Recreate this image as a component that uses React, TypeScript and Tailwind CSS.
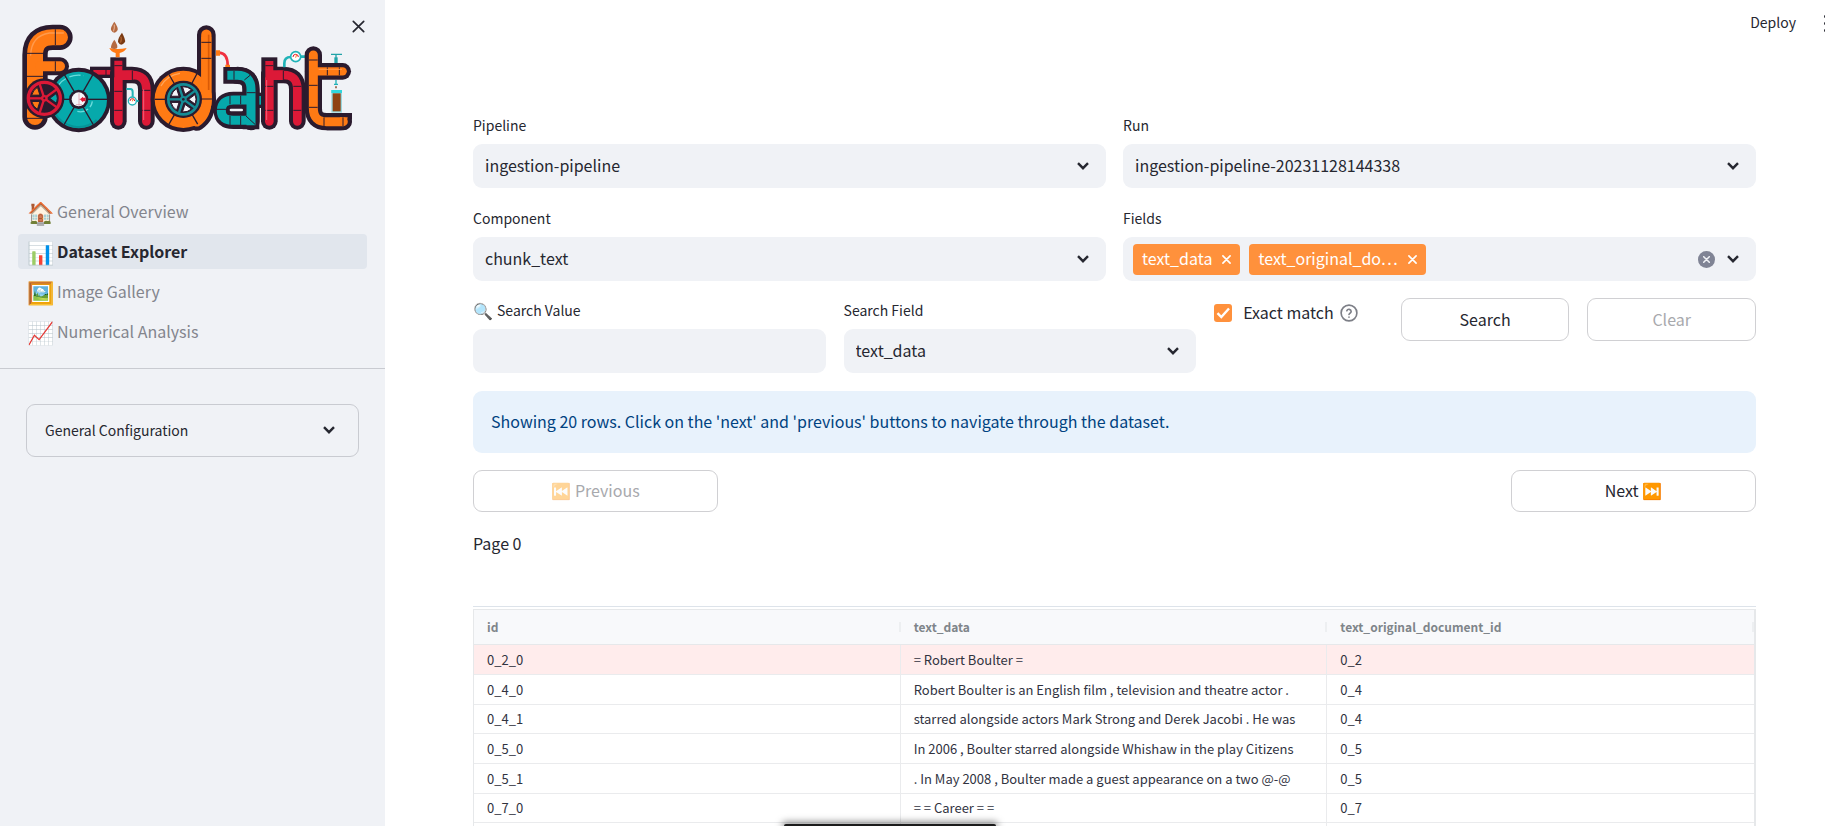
import React from "react";

const INK = "#2b1b2e";
const ORANGE = "#ff7a14";
const RED = "#dc1937";
const TEAL = "#06a9ab";

function polar(cx: number, cy: number, r: number, deg: number) {
  const a = (deg * Math.PI) / 180;
  return { x: cx + r * Math.cos(a), y: cy + r * Math.sin(a) };
}

function Spokes({ cx, cy, from, to, angles, color, width }: {
  cx: number; cy: number; from: number; to: number; angles: number[]; color: string; width: number;
}) {
  return (
    <g stroke={color} strokeWidth={width}>
      {angles.map((a) => {
        const p = polar(cx, cy, from, a);
        const q = polar(cx, cy, to, a);
        return <line key={a} x1={p.x} y1={p.y} x2={q.x} y2={q.y} />;
      })}
    </g>
  );
}

function Pipe({ d, color, width = 26, outline = 50, cap = "round" }: {
  d: string; color: string; width?: number; outline?: number; cap?: "round" | "butt" | "square";
}) {
  return (
    <g fill="none" strokeLinecap={cap} strokeLinejoin="round">
      <path d={d} stroke={INK} strokeWidth={outline} />
      <path d={d} stroke={color} strokeWidth={width} />
    </g>
  );
}

function Windows({ cx, cy, r, fills, start }: { cx: number; cy: number; r: number; fills: string[]; start: number }) {
  return (
    <g stroke={INK} strokeWidth="3" strokeLinejoin="round">
      {fills.map((fill, i) => {
        const mid = start + i * 72;
        const a = polar(cx, cy, r * 0.42, mid);
        const b = polar(cx, cy, r, mid - 22);
        const c = polar(cx, cy, r, mid + 22);
        return <path key={i} fill={fill} d={`M${a.x} ${a.y}L${b.x} ${b.y}A${r} ${r} 0 0 1 ${c.x} ${c.y}Z`} />;
      })}
    </g>
  );
}

function Logo() {
  return (
    <svg viewBox="60 54 996 345" className="h-[115px] w-[332px]" role="img" aria-label="Fondant">
      {/* f */}
      <g fill="none" strokeLinecap="round">
        <path d="M105 351V165Q105 112 158 112H180" stroke={INK} strokeWidth="76" />
        <path d="M120 199H180" stroke={INK} strokeWidth="54" />
        <path d="M105 351V165Q105 112 158 112H180" stroke={ORANGE} strokeWidth="48" />
        <path d="M120 199H180" stroke={ORANGE} strokeWidth="30" />
        <path d="M92 165Q94 108 148 99H190" stroke="#ff9a4d" strokeWidth="4" />
      </g>
      <path d="M166 88V135M80 160H130M80 229H130M80 355H130M166 184V214" stroke={INK} strokeWidth="3" />
      {/* n, with its feed pipe */}
      <path d="M270 217H340" stroke={INK} strokeWidth="34" />
      <path d="M280 217H350" stroke={RED} strokeWidth="14" />
      <Pipe d="M355 225H396Q439 225 439 268V364" color={RED} />
      <Pipe d="M355 225V364" color={RED} />
      <rect x="331" y="172" width="48" height="60" fill={INK} />
      <path d="M343 182H367V240H343ZM360 211H400V240H360Z" fill={RED} />
      <path d="M343 197H367M343 274H367M343 331H367M427 271H451M427 331H451M397 211V240M318 209V225" stroke={INK} strokeWidth="3" />
      <path d="M431 268V360" stroke="#f2617a" strokeWidth="3" />
      <path d="M328 144Q353 150 380 144Q374 156 359 159V172H347V159Q333 156 328 144Z" fill={ORANGE} />
      <path d="M343 65Q355 82 353 90Q343 107 333 90Q331 82 343 65Z" fill="#b46a42" />
      <path d="M343 74Q345 86 340 94" stroke="#e0a684" strokeWidth="4" fill="none" />
      <path d="M366 98Q377 118 375 126Q363 142 354 126Q353 115 366 98Z" fill="#7a3a12" />
      <path d="M362 110Q367 118 361 128" stroke="#a85d2c" strokeWidth="4" fill="none" />
      <path d="M343 119Q355 136 351 145Q342 149 333 144Q332 134 343 119Z" fill="#b46a42" />
      <path d="M379 267H391Q398 267 398 276V290M410 303H416" stroke="#21b3b8" strokeWidth="6" fill="none" />
      <circle cx="397" cy="303" r="12" fill="#fff" stroke="#21b3b8" strokeWidth="4" />
      <path d="M390 303A7 7 0 0 1 404 303" stroke={RED} strokeWidth="3" fill="none" />
      <path d="M397 304L400 296" stroke={ORANGE} strokeWidth="3" />
      {/* o */}
      <circle cx="236" cy="300" r="97" fill={INK} />
      <circle cx="236" cy="300" r="85" fill={TEAL} />
      <path d="M163 335A81 81 0 0 0 290 360" stroke="#07878c" strokeWidth="6" fill="none" opacity=".6" />
      <path d="M175 256A75 75 0 0 1 250 227M232 334A36 36 0 0 0 277 304" stroke="#6bdcdc" strokeWidth="4" strokeDasharray="34 8" fill="none" />
      <Spokes cx={236} cy={298} from={25} to={88} angles={[0, 60, 120, 180, 240, 300]} color={INK} width={4} />
      <circle cx="236" cy="298" r="29" fill={INK} />
      <circle cx="236" cy="298" r="21" fill="#f5f6fa" />
      <path d="M237 280V317M228 314H246M237 298H250" stroke="#d98a9a" strokeWidth="2" />
      <path d="M240 298L249 290V293H257V304H249V307Z" fill={RED} />
      {/* red hand wheel */}
      <circle cx="133" cy="295" r="60" fill={INK} />
      <Windows cx={133} cy={295} r={39} start={-144} fills={[ORANGE, INK, TEAL, INK, ORANGE]} />
      <circle cx="133" cy="295" r="48" fill="none" stroke={RED} strokeWidth="10" />
      <Spokes cx={133} cy={295} from={0} to={45} angles={[180, 108, 36, -36, -108]} color={RED} width={7} />
      <circle cx="133" cy="295" r="10" fill={RED} />
      <circle cx="133" cy="295" r="3" fill={INK} />
      {/* d */}
      <circle cx="550" cy="298" r="98" fill={INK} />
      <Pipe d="M619 104V300Q619 345 590 364" color={ORANGE} width={31} outline={56} />
      <circle cx="550" cy="298" r="70" fill="none" stroke={ORANGE} strokeWidth="32" />
      <path d="M604 110V300L634 298V110Z" fill={ORANGE} />
      <path d="M626 104V270" stroke="#d95a06" strokeWidth="5" />
      <path d="M483 258A78 78 0 0 1 540 220" stroke="#ffa55c" strokeWidth="4" fill="none" />
      <Spokes cx={550} cy={298} from={54} to={86} angles={[60, 120, 180, 240, 298]} color={INK} width={4} />
      <path d="M604 127H634M604 175H634M604 297H636" stroke={INK} strokeWidth="3" />
      <circle cx="550" cy="298" r="56" fill={INK} />
      <Windows cx={550} cy={298} r={38} start={-144} fills={["#f5f6fa", "#f5f6fa", "#f5f6fa", "#f5f6fa", "#f5f6fa"]} />
      <circle cx="550" cy="298" r="45" fill="none" stroke="#168c95" strokeWidth="8" />
      <Spokes cx={550} cy={298} from={0} to={42} angles={[180, 108, 36, -36, -108]} color="#168c95" width={7} />
      <circle cx="550" cy="298" r="10" fill="#168c95" />
      <circle cx="550" cy="298" r="4" fill={INK} />
      {/* return pipe right of d */}
      <path d="M658 158Q683 160 683 196" stroke="#f0303f" strokeWidth="8" fill="none" />
      <path d="M648 151H660V167H648ZM676 194H690V204H676Z" fill={ORANGE} />
      {/* a */}
      <g fill="none" strokeLinejoin="round">
        <path d="M670 226H712Q753 226 753 268V388M753 300H700Q666 300 666 332Q666 362 700 362H753" stroke={INK} strokeWidth="50" />
        <path d="M712 226Q753 226 753 268V365" stroke={INK} strokeWidth="52" strokeLinecap="round" />
        <path d="M682 226H712Q753 226 753 268V376" stroke={TEAL} strokeWidth="27" />
        <path d="M753 300H700Q664 300 664 332Q664 361 700 361H753" stroke={TEAL} strokeWidth="27" />
      </g>
      <path d="M687 318H736V342H687Q677 330 687 318Z" fill={INK} />
      <rect x="689" y="326" width="40" height="8" rx="4" fill="#f0f2f6" />
      <path d="M702 213V239M740 278H767M690 287V313M690 348V375M722 287V313M722 348V375M738 348L766 374M650 328H678M733 240L750 226" stroke={INK} strokeWidth="3" />
      <rect x="776" y="278" width="14" height="46" fill={INK} />
      <rect x="778" y="288" width="16" height="26" fill={TEAL} />
      {/* second n */}
      <Pipe d="M808 225H850Q892 225 892 268V364" color={RED} />
      <Pipe d="M808 225V364" color={RED} />
      <rect x="784" y="172" width="48" height="60" fill={INK} />
      <path d="M796 183H820V240H796ZM815 211H852V240H815Z" fill={RED} />
      <path d="M796 197H820M796 259H820M796 331H820M880 259H904M880 331H904M850 211V240" stroke={INK} strokeWidth="3" />
      <path d="M800 240V360" stroke="#f2617a" strokeWidth="3" />
      <path d="M853 202V190Q853 171 872 171M902 170H920" stroke="#21b3b8" strokeWidth="8" fill="none" />
      <circle cx="887" cy="170" r="15" fill="#fff" stroke="#21b3b8" strokeWidth="5" />
      <path d="M879 171A8 8 0 0 1 895 171" stroke={RED} strokeWidth="3" fill="none" />
      <path d="M887 173L890 163" stroke={ORANGE} strokeWidth="3" />
      {/* t, tap and beaker */}
      <path d="M993 163H1026M1008 163V192" stroke="#21a3a8" strokeWidth="4" />
      <path d="M1008 172V192" stroke="#21a3a8" strokeWidth="10" />
      <path d="M940 214H1028" stroke={INK} strokeWidth="50" strokeLinecap="round" />
      <path d="M940 165V325Q940 365 980 365H1030" stroke={INK} strokeWidth="52" fill="none" strokeLinecap="round" />
      <path d="M985 339H1056V355Q1054 391 1022 391H980Z" fill={INK} />
      <path d="M940 165V325Q940 365 980 365H1030" stroke={ORANGE} strokeWidth="27" fill="none" strokeLinecap="round" />
      <path d="M1020 352H1043Q1041 378 1020 378Z" fill={ORANGE} />
      <path d="M945 214H1028" stroke={ORANGE} strokeWidth="25" strokeLinecap="round" />
      <path d="M927 180H953M927 256H953M927 322H953M982 202V226M1018 202V226M972 352V378M1029 352V378" stroke={INK} strokeWidth="3" />
      <path d="M956 208H1026" stroke="#ff9a4d" strokeWidth="3" />
      <path d="M1008 240V253M1002 253H1014" stroke="#21b3b8" strokeWidth="4" />
      <path d="M1008 259V265" stroke="#7a3a12" strokeWidth="4" />
      <rect x="994" y="270" width="32" height="68" fill="#9ad7de" />
      <rect x="994" y="270" width="32" height="9" fill="#2fd6dc" />
      <rect x="998" y="280" width="24" height="54" fill="#8f4313" />
    </svg>
  );
}

function Chevron({ className = "" }: { className?: string }) {
  return (
    <svg viewBox="0 0 12 8" className={`h-2 w-3 ${className}`} fill="none" stroke="#262730" strokeWidth="2.4" aria-hidden="true">
      <path d="M1 1.2L6 6.2L11 1.2" />
    </svg>
  );
}

function Cross({ className }: { className: string }) {
  return (
    <svg viewBox="0 0 10 10" className={className} fill="none" stroke="currentColor" strokeLinecap="round" aria-hidden="true">
      <path d="M1 1L9 9M9 1L1 9" />
    </svg>
  );
}

const labelClass = "mb-2.5 flex h-[18px] items-center gap-1 text-sm leading-[18px]";
const buttonClass = "rounded-[9px] border border-[#d0d0d3] bg-white pb-0.5 text-base leading-6";

function SelectField({ id, label, value }: { id: string; label: string; value: string }) {
  return (
    <div className="min-w-0">
      <label htmlFor={id} className={labelClass}>{label}</label>
      <div className="relative">
        <select id={id} className="h-11 w-full appearance-none rounded-[9px] bg-[#f0f2f6] px-3 pb-0.5 text-base leading-6">
          <option>{value}</option>
        </select>
        <Chevron className="pointer-events-none absolute top-[18px] right-[17px]" />
      </div>
    </div>
  );
}

const pages = [
  { icon: "🏠", name: "General Overview" },
  { icon: "📊", name: "Dataset Explorer", current: true },
  { icon: "🖼️", name: "Image Gallery" },
  { icon: "📈", name: "Numerical Analysis" },
];

const rows = [
  ["0_2_0", "= Robert Boulter =", "0_2"],
  ["0_4_0", "Robert Boulter is an English film , television and theatre actor .", "0_4"],
  ["0_4_1", "starred alongside actors Mark Strong and Derek Jacobi . He was", "0_4"],
  ["0_5_0", "In 2006 , Boulter starred alongside Whishaw in the play Citizens", "0_5"],
  ["0_5_1", ". In May 2008 , Boulter made a guest appearance on a two @-@", "0_5"],
  ["0_7_0", "= = Career = =", "0_7"],
  ["", "", ""],
];

function Sidebar() {
  return (
    <aside className="w-[385px] shrink-0 bg-[#f0f2f6]">
      <div className="flex items-start pt-[18px] pl-5">
        <Logo />
        <button aria-label="Close sidebar" className="mt-0.5">
          <Cross className="h-[13px] w-[13px] stroke-[1.3]" />
        </button>
      </div>
      <nav className="mt-[61px] flex flex-col gap-[5px] border-b border-[#c9cbd1] px-[18px] pb-[19px]">
        {pages.map((p) => (
          <a
            key={p.name}
            href="#"
            className={`flex h-[35px] items-center gap-[5px] rounded px-2.5 pb-0.5 text-base ${
              p.current ? "bg-[#e1e6ed] font-bold text-[#262730]" : "text-[#83858d]"
            }`}
          >
            <span className="flex w-6 justify-center text-[22px] leading-6 font-normal text-[#262730]">{p.icon}</span>
            {p.name}
          </a>
        ))}
      </nav>
      <button className="mx-[26px] mt-[35px] flex h-[53px] w-[333px] items-center justify-between rounded-[9px] border border-[#c9cbd1] pr-[23px] pb-0.5 pl-[18px] text-sm">
        General Configuration
        <Chevron />
      </button>
    </aside>
  );
}

export default function App() {
  return (
    <div className="flex h-screen overflow-hidden bg-white font-['Source_Sans_Pro','Noto_Sans_CJK_SC',sans-serif] text-[#262730]">
      <Sidebar />
      <main className="min-w-0 flex-1">
        <header className="flex h-[46px] items-center justify-end gap-7 overflow-hidden">
          <button className="pb-0.5 text-sm leading-5">Deploy</button>
          <button aria-label="Menu" className="-mr-0.5 flex flex-col gap-1">
            <span className="size-[3px] rounded-full bg-[#262730]" />
            <span className="size-[3px] rounded-full bg-[#262730]" />
            <span className="size-[3px] rounded-full bg-[#262730]" />
          </button>
        </header>
        <div className="pt-[70px] pr-[69px] pl-[88px]">
          <div className="grid grid-cols-2 gap-x-[17px] gap-y-[21px]">
            <SelectField id="pipeline" label="Pipeline" value="ingestion-pipeline" />
            <SelectField id="run" label="Run" value="ingestion-pipeline-20231128144338" />
            <SelectField id="component" label="Component" value="chunk_text" />
            <div role="group" aria-labelledby="fields-label">
              <span id="fields-label" className={labelClass}>Fields</span>
              <div className="flex h-11 items-center rounded-[9px] bg-[#f0f2f6] pr-[17px] pl-2.5">
                <div className="flex flex-1 gap-[9px] text-base text-white">
                  {["text_data", "text_original_do…"].map((f) => (
                    <span key={f} className="flex h-[31px] items-center gap-2.5 rounded bg-[#ff913c] px-[9px]">
                      <span className="pb-0.5">{f}</span>
                      <button aria-label={`Remove ${f}`}><Cross className="size-[9px] stroke-[1.8]" /></button>
                    </span>
                  ))}
                </div>
                <button aria-label="Clear all" className="mr-3 flex size-[17px] items-center justify-center rounded-full bg-[#808495] text-[#f0f2f6]">
                  <Cross className="size-[7px] stroke-[2.2]" />
                </button>
                <button aria-label="Open"><Chevron /></button>
              </div>
            </div>
          </div>

          <div className="mt-5 grid grid-cols-[23fr_23fr_11fr_11fr_11fr] items-start gap-[18px]">
            <div>
              <label htmlFor="search-value" className={labelClass}>
                <span className="text-base leading-[18px]">🔍</span>
                Search Value
              </label>
              <input id="search-value" type="text" className="block h-11 w-full rounded-[9px] bg-[#f0f2f6] px-3 text-base" />
            </div>
            <SelectField id="search-field" label="Search Field" value="text_data" />
            <div className="flex h-6 items-center whitespace-nowrap text-base">
              <label className="flex items-center gap-[11px]">
                <span className="relative flex size-[18px]">
                  <input type="checkbox" defaultChecked className="size-[18px] appearance-none rounded-[3px] bg-[#ff913c]" />
                  <svg viewBox="0 0 18 18" className="pointer-events-none absolute inset-0" fill="none" stroke="#fff" strokeWidth="2.4" aria-hidden="true">
                    <path d="M3.5 9.2L7.3 13L15 4.5" />
                  </svg>
                </span>
                <span className="pb-0.5">Exact match</span>
              </label>
              <svg viewBox="0 0 24 24" className="ml-1.5 size-[18px]" fill="none" stroke="#7d7f87" strokeWidth="2.2" strokeLinecap="round" strokeLinejoin="round" role="img" aria-label="Help">
                <circle cx="12" cy="12" r="10.5" />
                <path d="M9.1 9a3 3 0 0 1 5.8 1c0 2-2.9 2.8-2.9 4M12 17.5v.1" />
              </svg>
            </div>
            <button className={`-mt-[3px] h-[43px] ${buttonClass}`}>Search</button>
            <button disabled className={`-mt-[3px] h-[43px] text-[#a8a9ad] ${buttonClass}`}>Clear</button>
          </div>

          <div role="status" className="mt-[18px] rounded-[9px] bg-[#e8f2fc] px-[18px] pt-[18px] pb-5 text-base leading-6 text-[#004280]">
            Showing 20 rows. Click on the 'next' and 'previous' buttons to navigate through the dataset.
          </div>

          <div className="mt-[17px] flex justify-between">
            <button disabled className={`h-[42px] w-[245px] text-[#a8a9ad] ${buttonClass}`}>
              <span className="opacity-40">⏮️</span> Previous
            </button>
            <button className={`h-[42px] w-[245px] ${buttonClass}`}>Next ⏭️</button>
          </div>

          <p className="mt-[19px] text-base leading-6">Page 0</p>

          <div className="mt-[51px] border-t border-[#dde3ea] pt-0.5">
            <table className="w-full table-fixed border-separate border-spacing-0 border border-r-2 border-[#e6e8ea] text-left text-[13px]">
              <thead>
                <tr className="h-[35px] bg-[#f8f9fb] text-xs text-[#7f858a]">
                  {["id", "text_data", "text_original_document_id"].map((h) => (
                    <th key={h} scope="col" className="border-b border-[#e6e8ea] p-0 font-bold">
                      <div className="flex items-center">
                        <span className="flex-1 pl-[13px] leading-4">{h}</span>
                        <span className="h-2.5 w-0.5 bg-[#edeff1]" />
                      </div>
                    </th>
                  ))}
                </tr>
              </thead>
              <tbody>
                {rows.map((r, i) => (
                  <tr key={i} className="h-[30px] text-[#31333f] first:bg-[#ffecec] nth-[3n]:h-[29px]">
                    {r.map((c, j) => (
                      <td key={j} className="overflow-hidden border-r border-b border-[#eaebed] p-0 pl-[13px] leading-5 whitespace-nowrap last:border-r-0">
                        {c}
                      </td>
                    ))}
                  </tr>
                ))}
              </tbody>
            </table>
          </div>
        </div>
      </main>
      <div className="fixed bottom-0 left-[784px] h-0.5 w-[212px] rounded-t bg-[#1c1c1c] shadow-[0_0_7px_2px_rgba(0,0,0,0.5)]" />
    </div>
  );
}
